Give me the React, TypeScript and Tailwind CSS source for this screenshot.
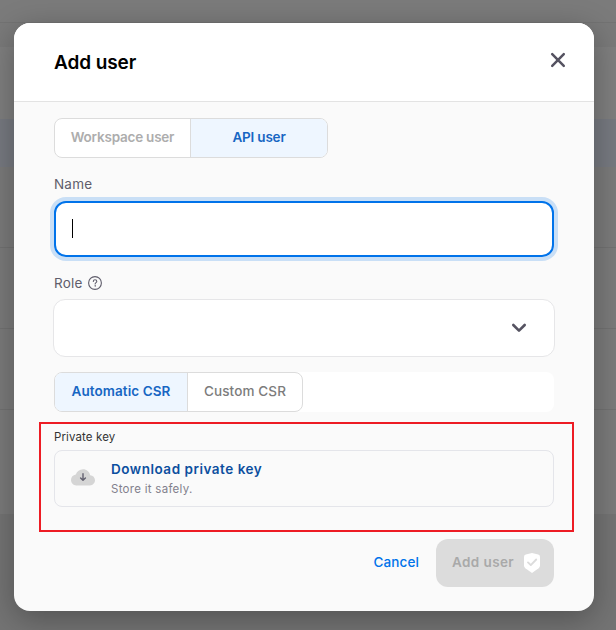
import React from "react";

function CloseIcon() {
  return (
    <svg width="16" height="16" viewBox="0 0 16 16" fill="none" stroke="#555361" strokeWidth="2.5" strokeLinecap="round">
      <path d="M2.2 2.2L13.8 13.8M13.8 2.2L2.2 13.8" />
    </svg>
  );
}

function HelpIcon() {
  return (
    <svg width="14" height="14" viewBox="0 0 14 14" fill="none" stroke="#5f5d6b" strokeWidth="1.1" strokeLinecap="round">
      <circle cx="7" cy="7" r="6.4" />
      <path d="M5.3 5.4C5.4 4.3 6.1 3.8 7 3.8C8 3.8 8.8 4.4 8.8 5.4C8.8 6.6 7.1 6.6 7.1 8" />
      <circle cx="7.1" cy="9.9" r="0.35" fill="#5f5d6b" strokeWidth="0.6" />
    </svg>
  );
}

function ChevronIcon() {
  return (
    <svg width="16" height="10" viewBox="0 0 16 10" fill="none" stroke="#555361" strokeWidth="2.6" strokeLinecap="round" strokeLinejoin="round">
      <path d="M2.3 2L8 7.7L13.7 2" />
    </svg>
  );
}

function CloudIcon() {
  return (
    <svg width="24" height="17" viewBox="0 0 24 17" fill="none">
      <path
        d="M5.4 16.4C2.3 16.4 0 14 0 11.1C0 8.3 2 6 4.8 5.6C6 2.4 8.7 0.3 12 0.3C15.6 0.3 18.4 2.8 19.2 6.2C22 6.4 24 8.6 24 11.3C24 14.1 21.8 16.4 19 16.4Z"
        fill="#d5d5d5"
      />
      <path d="M12 4.8V11M9.6 8.9L12 11.3L14.4 8.9" stroke="#62606f" strokeWidth="1.4" strokeLinecap="round" strokeLinejoin="round" />
    </svg>
  );
}

function ShieldIcon() {
  return (
    <svg width="16" height="20" viewBox="0 0 16 20" fill="none">
      <path d="M8 0L14.2 1.5Q16 2 16 3.8V12.2Q16 14 14.6 15.2L8 20L1.4 15.2Q0 14 0 12.2V3.8Q0 2 1.8 1.5Z" fill="#fff" />
      <path d="M4 9.4L6.8 12.1L12.2 6.5" stroke="#dcdcdc" strokeWidth="1.9" strokeLinecap="round" strokeLinejoin="round" />
    </svg>
  );
}

function Backdrop() {
  return (
    <div className="absolute inset-0 flex flex-col bg-[#7b7b7b]">
      <div className="h-[23px] border-b border-[#737373]" />
      <div className="h-6 bg-[#7a7a7a]" />
      <div className="h-[72px] bg-[#7f7f7f]" />
      <div className="h-12 bg-[#777a81]" />
      <div className="h-[81px] border-b border-[#727272]" />
      <div className="h-[81px] border-b border-[#727272]" />
      <div className="h-[81px] border-b border-[#727272]" />
      <div className="h-[104px]" />
      <div className="grow bg-[#747474]" />
    </div>
  );
}

export default function App() {
  return (
    <div className="relative h-[630px] w-[616px] overflow-hidden font-['Inter',sans-serif]">
      <Backdrop />
      <div className="relative pl-3.5 pt-[23px]">
        <div role="dialog" className="flex h-[588px] w-[580px] flex-col overflow-hidden rounded-2xl bg-[#fafafa] shadow-[0_8px_32px_rgba(0,0,0,0.3)]">
          <header className="flex h-[79px] shrink-0 items-center justify-between border-b border-[#e3e3e3] bg-white pl-10 pr-7">
            <h1 className="mt-0.5 text-[19px] font-semibold leading-6 tracking-[-0.1px] text-black">Add user</h1>
            <button aria-label="Close" className="mb-[5px]">
              <CloseIcon />
            </button>
          </header>

          <main className="flex flex-col px-10 pt-4">
            <div className="flex h-10 w-[274px] overflow-hidden rounded-lg border border-[#dcdcdc] bg-white text-[13.5px] font-semibold">
              <button className="w-[136px] border-r border-[#dcdcdc] pb-0.5 tracking-[-0.22px] text-[#adadad]">Workspace user</button>
              <button className="grow bg-[#eef6ff] pb-0.5 tracking-[-0.2px] text-[#1766c3]">API user</button>
            </div>

            <label className="mt-4 text-[13.5px] leading-5 tracking-[0.2px] text-[#5f5d6b]">Name</label>
            <div className="mt-[7px] flex h-14 items-center rounded-xl border-2 border-[#0073ea] bg-white pl-4 ring-4 ring-[#c9dff6]">
              <div className="mb-0.5 h-[19px] w-px bg-black" />
            </div>

            <div className="mt-4 flex h-5 items-center gap-[5px] text-[13.5px] leading-5 tracking-[0.2px] text-[#5f5d6b]">
              <span>Role</span>
              <HelpIcon />
            </div>
            <div className="-mx-px mt-1.5 flex h-[58px] items-center justify-end rounded-xl border border-[#e6e6e8] bg-white pr-[27px]">
              <ChevronIcon />
            </div>

            <div className="mt-[15px] flex h-10 rounded-lg bg-white text-[13.5px] font-semibold">
              <div className="flex w-[249px] overflow-hidden rounded-lg border border-[#dcdcdc]">
                <button className="w-[133px] border-r border-[#dcdcdc] bg-[#eef6ff] pb-0.5 tracking-[0.08px] text-[#1766c3]">Automatic CSR</button>
                <button className="grow pb-0.5 font-medium tracking-[0.12px] text-[#7c7c7c]">Custom CSR</button>
              </div>
            </div>

            <section className="-ml-[15px] mt-2.5 h-[110px] w-[535px] border-2 border-[#ed1c24] pl-[13px] pr-[18px] pt-1">
              <h2 className="text-[11.5px] leading-[18px] tracking-[0.12px] text-[#333]">Private key</h2>
              <div className="mt-1 flex h-[57px] items-center gap-4 rounded-lg border border-[#e4e5ea] pl-4">
                <div className="mb-[3px]"><CloudIcon /></div>
                <div className="flex flex-col">
                  <a className="-mt-px mb-px text-[13.5px] font-semibold leading-5 tracking-[0.52px] text-[#0c4f9f]">Download private key</a>
                  <span className="text-[11.5px] leading-[18px] tracking-[0.28px] text-[#82808c]">Store it safely.</span>
                </div>
              </div>
            </section>

            <footer className="mt-[7px] flex h-12 items-center justify-end gap-[17px]">
              <button className="pb-0.5 text-[13.5px] font-medium tracking-[0.1px] text-[#0073ea]">Cancel</button>
              <button className="flex h-12 w-[118px] items-center justify-between rounded-xl bg-[#dcdcdc] pl-4 pr-3.5 text-[13.5px] font-semibold tracking-[0.4px] text-[#a9a9a9]">
                <span className="pb-0.5">Add user</span>
                <ShieldIcon />
              </button>
            </footer>
          </main>
        </div>
      </div>
    </div>
  );
}
